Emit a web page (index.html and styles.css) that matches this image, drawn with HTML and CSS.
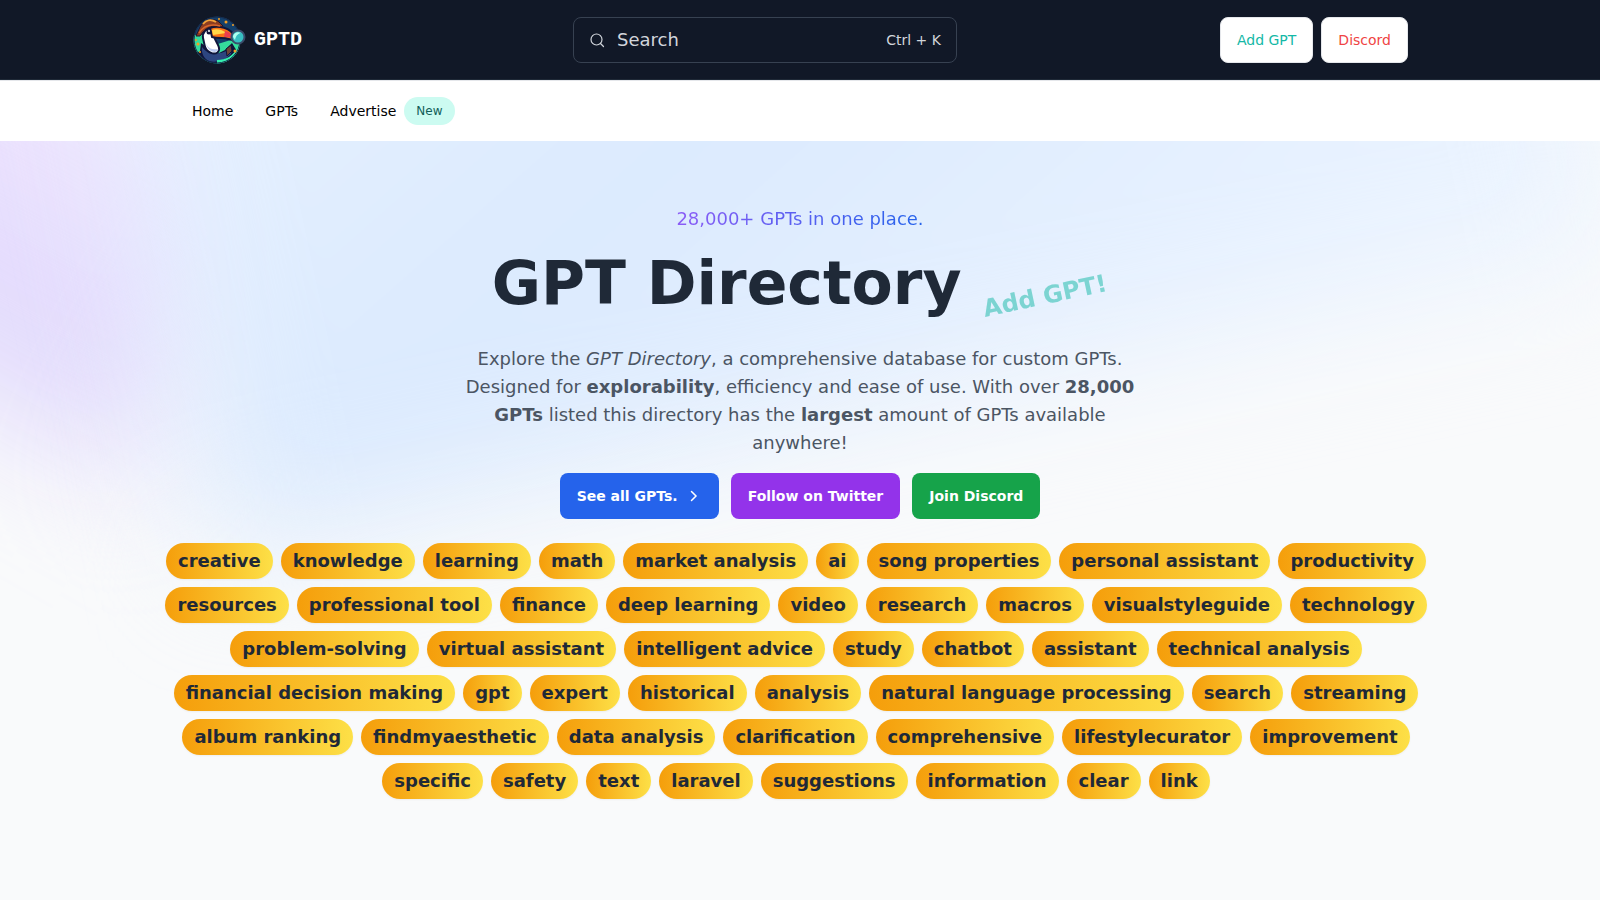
FILE: index.html
```html
<!DOCTYPE html>
<html lang="en">
<head>
<meta charset="utf-8">
<meta name="viewport" content="width=device-width, initial-scale=1">
<title>GPT Directory</title>
<link rel="stylesheet" href="styles.css">
</head>
<body>
<header class="topbar">
  <div class="container topbar-inner">
    <a class="brand" href="#">
      <svg class="brand-logo" viewBox="0 0 54 48" aria-hidden="true">
        <defs><clipPath id="disc"><circle cx="25" cy="24" r="23.5"/></clipPath></defs>
        <g clip-path="url(#disc)">
          <rect width="54" height="50" fill="#14406b"/>
          <path d="M0 19h10l6 12 26-8 12 4v24H0z" fill="#35dc9c"/>
          <path d="M9 27l-1 8-6 4 8 9 15 2 14-4 7-9-6-10-7 7-8 4z" fill="#10133a"/>
          <path d="M10 31c5 7 16 9 26 3l4-2-1 6c-6 7-16 9-22 7-5-2-8-8-7-14z" fill="#2d4580"/>
          <path d="M25 44c9 0 16-4 21-13l3 2c-4 10-12 15-24 16z" fill="#35f0ae"/>
          <path d="M34 33l5-4 1 6-5 5z" fill="#6a4337" stroke="#10133a"/>
        </g>
        <circle cx="25" cy="24" r="23" fill="none" stroke="#17294a"/>
        <path d="M11 22c-1-5 3-10 9-10l2 8c1 6 6 9 5 14-2 6-11 4-14-3z" fill="#fff" stroke="#10163c" stroke-width="2"/>
        <path d="M14 28c3 5 7 6 12 5-1 5-9 4-12-5z" fill="#bccaf2"/>
        <path d="M18 12c7-3 22-1 25 10l-1 3c-7-4-14-2-22-4z" fill="#f97316" stroke="#10163c" stroke-width="2"/>
        <path d="M20 14c5-2 11 0 14 3l-13 2z" fill="#ffd84a"/>
        <path d="M33 15c5 1 8 4 9 8-4-2-7-2-10-2z" fill="#e83f4f"/>
        <circle cx="17" cy="16" r="2.500" fill="#11163a"/>
        <circle cx="17" cy="15" r="1" fill="#fff"/>
        <path d="M4 20l4-9c4-8 15-9 19-5l4 4-2 1c-8-2-14 0-18 5l-3 4z" fill="#8c3d20" stroke="#21142b"/>
        <path d="M11 8c3-4 8-5 13-2" fill="none" stroke="#f5a43a" stroke-width="2"/>
        <path d="M7 17c5-8 13-9 21-7" fill="none" stroke="#d9662c" stroke-width="1.500"/>
        <circle cx="46" cy="21" r="6.500" fill="#38bfc2" stroke="#3b4c6c" stroke-width="2"/>
        <path d="M41 21c0-4 5-6 8-4-2 0-5 2-6 7z" fill="#b0fff0"/>
        <g fill="#f59e22"><circle cx="34" cy="6" r="1.500"/><circle cx="27" cy="3" r="1"/><circle cx="41" cy="9" r="1"/><circle cx="6" cy="28" r="1.500"/><circle cx="4" cy="24" r="1"/><circle cx="43" cy="35" r="1.500"/><circle cx="8" cy="36" r="1"/></g>
      </svg>
      <span>GPTD</span>
    </a>
    <button class="search" type="button">
      <svg class="search-icon" viewBox="0 0 16 16" aria-hidden="true"><circle cx="7.500" cy="7.500" r="5.500"/><path d="M11.500 11.500l3 3"/></svg>
      <span class="search-label">Search</span>
      <span class="search-keys">Ctrl + K</span>
    </button>
    <div class="actions">
      <a class="action action-teal" href="#">Add GPT</a>
      <a class="action action-red" href="#">Discord</a>
    </div>
  </div>
</header>
<nav class="subnav">
  <div class="container subnav-inner">
    <a href="#">Home</a>
    <a href="#">GPTs</a>
    <a class="with-badge" href="#">Advertise <span class="badge">New</span></a>
  </div>
</nav>
<main class="hero">
  <div class="glow" aria-hidden="true">
    <div class="glow-violet"></div>
    <div class="glow-blue"></div>
  </div>
  <div class="hero-content">
    <p class="eyebrow">28,000+ GPTs in one place.</p>
    <h1 class="title">GPT Directory <a class="sticker" href="#">Add GPT!</a></h1>
    <p class="lead">Explore the <em>GPT Directory</em>, a comprehensive database for custom GPTs. Designed for <b>explorability</b>, efficiency and ease of use. With over <b>28,000 GPTs</b> listed this directory has the <b>largest</b> amount of GPTs available anywhere!</p>
    <div class="cta-row">
      <a class="cta cta-blue" href="#">See all GPTs.
        <svg class="chevron" viewBox="0 0 16 16" aria-hidden="true"><path d="M5.500 3.500L10 8l-4.500 4.500"/></svg>
      </a>
      <a class="cta cta-purple" href="#">Follow on Twitter</a>
      <a class="cta cta-green" href="#">Join Discord</a>
    </div>
    <div class="tags">
      <a class="tag" href="#">creative</a>
      <a class="tag" href="#">knowledge</a>
      <a class="tag" href="#">learning</a>
      <a class="tag" href="#">math</a>
      <a class="tag" href="#">market analysis</a>
      <a class="tag" href="#">ai</a>
      <a class="tag" href="#">song properties</a>
      <a class="tag" href="#">personal assistant</a>
      <a class="tag" href="#">productivity</a>
      <a class="tag" href="#">resources</a>
      <a class="tag" href="#">professional tool</a>
      <a class="tag" href="#">finance</a>
      <a class="tag" href="#">deep learning</a>
      <a class="tag" href="#">video</a>
      <a class="tag" href="#">research</a>
      <a class="tag" href="#">macros</a>
      <a class="tag" href="#">visualstyleguide</a>
      <a class="tag" href="#">technology</a>
      <a class="tag" href="#">problem-solving</a>
      <a class="tag" href="#">virtual assistant</a>
      <a class="tag" href="#">intelligent advice</a>
      <a class="tag" href="#">study</a>
      <a class="tag" href="#">chatbot</a>
      <a class="tag" href="#">assistant</a>
      <a class="tag" href="#">technical analysis</a>
      <a class="tag" href="#">financial decision making</a>
      <a class="tag" href="#">gpt</a>
      <a class="tag" href="#">expert</a>
      <a class="tag" href="#">historical</a>
      <a class="tag" href="#">analysis</a>
      <a class="tag" href="#">natural language processing</a>
      <a class="tag" href="#">search</a>
      <a class="tag" href="#">streaming</a>
      <a class="tag" href="#">album ranking</a>
      <a class="tag" href="#">findmyaesthetic</a>
      <a class="tag" href="#">data analysis</a>
      <a class="tag" href="#">clarification</a>
      <a class="tag" href="#">comprehensive</a>
      <a class="tag" href="#">lifestylecurator</a>
      <a class="tag" href="#">improvement</a>
      <a class="tag" href="#">specific</a>
      <a class="tag" href="#">safety</a>
      <a class="tag" href="#">text</a>
      <a class="tag" href="#">laravel</a>
      <a class="tag" href="#">suggestions</a>
      <a class="tag" href="#">information</a>
      <a class="tag" href="#">clear</a>
      <a class="tag" href="#">link</a>
    </div>
  </div>
</main>
</body>
</html>
```
FILE: styles.css
```css
* { box-sizing: border-box; }
body {
  margin: 0;
  min-height: 100vh;
  display: flex;
  flex-direction: column;
  background: #f9fafb;
  color: #1f2937;
  font-family: "DejaVu Sans", sans-serif;
  font-size: 14px;
  line-height: 20px;
}
a { color: inherit; text-decoration: none; }
p, h1 { margin: 0; }

.container {
  width: 100%;
  max-width: 1280px;
  margin: 0 auto;
  padding: 0 32px;
}

/* Top bar */
.topbar {
  background: #111827;
  border-bottom: 1px solid #1f2937;
}
.topbar-inner {
  display: flex;
  align-items: center;
  justify-content: space-between;
  min-height: 79px;
}
.brand {
  display: flex;
  align-items: center;
  gap: 8px;
  padding-right: 8px;
  color: #fff;
  font-family: "Liberation Mono", monospace;
  font-size: 20px;
  line-height: 28px;
  font-weight: 700;
}
.brand-logo { width: 54px; height: 48px; }
.search {
  display: flex;
  align-items: center;
  gap: 12px;
  width: 384px;
  height: 46px;
  padding: 0 15px;
  border: 1px solid #374151;
  border-radius: 8px;
  background: transparent;
  color: #d1d5db;
  font: inherit;
  text-align: left;
}
.search-icon {
  width: 16px;
  height: 16px;
  fill: none;
  stroke: currentColor;
  stroke-width: 1.2;
  stroke-linecap: round;
}
.search-label { flex: 1; font-size: 18px; line-height: 28px; }
.actions { display: flex; justify-content: flex-end; gap: 8px; }
.action {
  padding: 12px 16px;
  border: 1px solid #e5e7eb;
  border-radius: 8px;
  background: #fff;
}
.action-teal { color: #14b8a6; }
.action-red { color: #ef4444; }

/* Section navigation */
.subnav {
  background: #fff;
  border-top: 1px solid #e5e7eb;
}
.subnav-inner {
  display: flex;
  align-items: center;
  gap: 32px;
  padding-top: 16px;
  padding-bottom: 16px;
  color: #000;
}
.with-badge { display: flex; align-items: center; gap: 8px; }
.badge {
  padding: 6px 12px;
  border-radius: 14px;
  background: #ccfbf1;
  color: #115e59;
  font-size: 12px;
  line-height: 16px;
}

/* Hero */
.hero {
  position: relative;
  flex: 1;
  overflow: hidden;
}
.glow {
  position: absolute;
  top: -384px;
  left: 50%;
  display: flex;
  transform: translateX(-50%);
}
.glow-violet {
  width: 400px;
  height: 704px;
  background: linear-gradient(to right, rgba(196, 181, 253, 0.5), #f3e8ff);
  filter: blur(64px);
  transform: translate(-160px, 24px) rotate(-60deg);
}
.glow-blue {
  width: 1440px;
  height: 816px;
  background: linear-gradient(to top left, #eff6ff, #dbeafe, #eff6ff);
  filter: blur(64px);
  transform: translateX(-232px) rotate(-12deg);
  transform-origin: top left;
}
.hero-content {
  position: relative;
  max-width: 1280px;
  margin: 0 auto;
  padding: 64px 0;
  display: flex;
  flex-direction: column;
  align-items: center;
  text-align: center;
}
.eyebrow {
  background: linear-gradient(to left, #2563eb, #8b5cf6);
  background-clip: text;
  -webkit-background-clip: text;
  color: transparent;
  font-size: 18px;
  line-height: 28px;
}
.title {
  margin-top: 20px;
  font-size: 60px;
  line-height: 60px;
  font-weight: 700;
}
.sticker {
  display: inline-block;
  color: #14b8a6;
  font-size: 24px;
  line-height: 32px;
  opacity: 0.5;
  transform: rotate(-12deg);
}
.lead {
  max-width: 672px;
  margin-top: 32px;
  color: #4b5563;
  font-size: 18px;
  line-height: 28px;
}
.cta-row { display: flex; gap: 12px; margin-top: 16px; }
.cta {
  display: flex;
  align-items: center;
  gap: 8px;
  padding: 13px 17px;
  border-radius: 8px;
  color: #fff;
  font-weight: 700;
}
.cta-blue { background: #2563eb; }
.cta-purple { background: #9333ea; }
.cta-green { background: #16a34a; }
.chevron {
  width: 16px;
  height: 16px;
  fill: none;
  stroke: currentColor;
  stroke-width: 1.5;
  stroke-linecap: round;
}
.tags {
  display: flex;
  flex-wrap: wrap;
  justify-content: center;
  row-gap: 8px;
  margin-top: 24px;
}
.tag {
  margin-right: 8px;
  padding: 4px 12px;
  border-radius: 18px;
  background: linear-gradient(to right, #f59e0b, #fde047);
  box-shadow: 0 1px 2px rgba(0, 0, 0, 0.05);
  font-size: 18px;
  line-height: 28px;
  font-weight: 700;
}
```
